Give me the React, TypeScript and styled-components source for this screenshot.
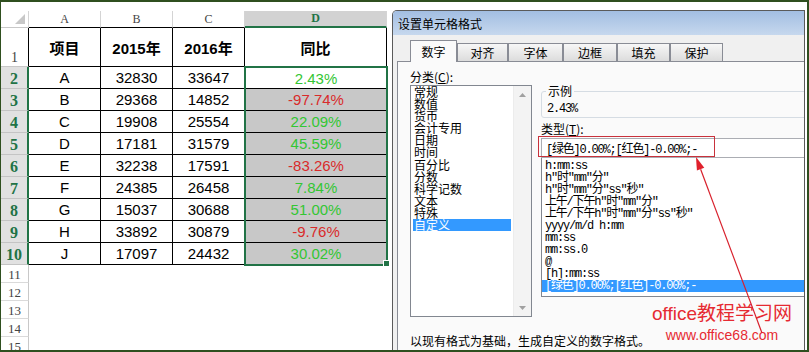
import styled, { createGlobalStyle, css } from "styled-components";

const GlobalStyle = createGlobalStyle`
  html, body {
    margin: 0;
    padding: 0;
    background: #fff;
  }
  body {
    font-family: "Liberation Sans", "Noto Sans CJK SC", sans-serif;
  }
`;

const XL_GREEN = "#217346";
const UP = "#33c633";
const DOWN = "#d92b2b";

type Row = { name: string; y2015: number; y2016: number; pct: string };

const rows: Row[] = [
  { name: "A", y2015: 32830, y2016: 33647, pct: "2.43%" },
  { name: "B", y2015: 29368, y2016: 14852, pct: "-97.74%" },
  { name: "C", y2015: 19908, y2016: 25554, pct: "22.09%" },
  { name: "D", y2015: 17181, y2016: 31579, pct: "45.59%" },
  { name: "E", y2015: 32238, y2016: 17591, pct: "-83.26%" },
  { name: "F", y2015: 24385, y2016: 26458, pct: "7.84%" },
  { name: "G", y2015: 15037, y2016: 30688, pct: "51.00%" },
  { name: "H", y2015: 33892, y2016: 30879, pct: "-9.76%" },
  { name: "J", y2015: 17097, y2016: 24432, pct: "30.02%" },
];

const categories = [
  "常规", "数值", "货币", "会计专用", "日期", "时间",
  "百分比", "分数", "科学记数", "文本", "特殊", "自定义",
];

const formats = [
  'h:mm:ss',
  'h"时"mm"分"',
  'h"时"mm"分"ss"秒"',
  '上午/下午h"时"mm"分"',
  '上午/下午h"时"mm"分"ss"秒"',
  'yyyy/m/d h:mm',
  'mm:ss',
  'mm:ss.0',
  '@',
  '[h]:mm:ss',
  '[绿色]0.00%;[红色]-0.00%;-',
];

const tabs = [
  { label: "数字", w: 47 },
  { label: "对齐", w: 51 },
  { label: "字体", w: 55 },
  { label: "边框", w: 54 },
  { label: "填充", w: 53 },
  { label: "保护", w: 53 },
];

/* ---------- frame ---------- */

const Frame = styled.div`
  width: 809px;
  height: 352px;
  box-sizing: border-box;
  border-style: solid;
  border-color: #2f4f1f;
  border-width: 2px 2px 2px 1px;
  display: flex;
  align-items: flex-start;
  overflow: hidden;
  background: #fff;
`;

/* ---------- spreadsheet ---------- */

const Sheet = styled.div`
  display: flex;
  width: 390px;
  flex-shrink: 0;
  padding-top: 9px;
`;

const Col = styled.div<{ $w: number }>`
  display: flex;
  flex-direction: column;
  width: ${(p) => p.$w}px;
  flex-shrink: 0;
`;

const Corner = styled.div`
  position: relative;
  height: 17px;
  box-sizing: border-box;
  border-right: 1px solid #d4d4d4;
  border-bottom: 1px solid #c8c8c8;

  &::after {
    content: "";
    position: absolute;
    right: 3px;
    bottom: 3px;
    border-left: 10px solid transparent;
    border-bottom: 10px solid #c8c8c8;
  }
`;

const ColHead = styled.div<{ $sel?: boolean }>`
  height: 17px;
  box-sizing: border-box;
  display: flex;
  align-items: center;
  justify-content: center;
  font-family: "Liberation Serif", serif;
  font-size: 12px;
  color: ${(p) => (p.$sel ? XL_GREEN : "#444")};
  font-weight: ${(p) => (p.$sel ? 700 : 400)};
  background: ${(p) => (p.$sel ? "#d2d2d2" : "#fff")};
  border-right: 1px solid #d4d4d4;
  border-bottom: ${(p) => (p.$sel ? `2px solid ${XL_GREEN}` : "1px solid #000")};
`;

type HeadKind = "title" | "sel" | "empty";

const headKinds = {
  title: css`
    font-size: 14px;
    color: #444;
    background: #fff;
    border-right: 1px solid #000;
    border-bottom: 1px solid #c8c8c8;
  `,
  sel: css`
    font-size: 16px;
    font-weight: 700;
    color: ${XL_GREEN};
    background: #e1e1e1;
    border-right: 2px solid ${XL_GREEN};
    border-bottom: 1px solid #c4c4c4;
  `,
  empty: css`
    font-size: 13px;
    color: #444;
    background: #fff;
    border-right: 1px solid #c8c8c8;
    border-bottom: 1px solid #dadada;
  `,
};

const RowHead = styled.div<{ $h: number; $kind: HeadKind }>`
  height: ${(p) => p.$h}px;
  box-sizing: border-box;
  display: flex;
  align-items: flex-end;
  justify-content: center;
  padding-bottom: 1px;
  font-family: "Liberation Serif", serif;
  line-height: 1;
  ${(p) => headKinds[p.$kind]}
`;

const Cell = styled.div<{
  $h: number;
  $bg?: string;
  $color?: string;
  $bold?: boolean;
  $noRight?: boolean;
  $noBottom?: boolean;
}>`
  height: ${(p) => p.$h}px;
  box-sizing: border-box;
  display: flex;
  align-items: center;
  justify-content: center;
  font-family: "Liberation Sans", "Noto Sans CJK SC", sans-serif;
  font-size: 15px;
  font-weight: ${(p) => (p.$bold ? 700 : 400)};
  color: ${(p) => p.$color ?? "#000"};
  background: ${(p) => p.$bg ?? "transparent"};
  border-right: ${(p) => (p.$noRight ? "none" : "1px solid #000")};
  border-bottom: ${(p) => (p.$noBottom ? "none" : "1px solid #000")};
`;

const Selection = styled.div`
  position: relative;
  margin: -1px -1px 0 -1px;
  border: 2px solid ${XL_GREEN};
  display: flex;
  flex-direction: column;
`;

const FillHandle = styled.div`
  position: absolute;
  right: -4px;
  bottom: -3px;
  width: 5px;
  height: 5px;
  background: ${XL_GREEN};
  border: 1px solid #fff;
`;

/* ---------- dialog ---------- */

const Dialog = styled.div`
  position: relative;
  flex: 1;
  align-self: stretch;
  margin: 8px 2px 0 1px;
  display: flex;
  flex-direction: column;
  border: 1px solid #5a5a5a;
  border-bottom: none;
  border-top-left-radius: 5px;
  overflow: hidden;
  font-family: "Noto Sans CJK SC", sans-serif;
  font-size: 12px;
  color: #000;
`;

const TitleBar = styled.div`
  height: 24px;
  flex-shrink: 0;
  display: flex;
  align-items: center;
  padding-left: 5px;
  background: linear-gradient(to bottom, #a2bee2, #c6d8ee);
  font-size: 12px;
`;

const Body = styled.div`
  flex: 1;
  display: flex;
  flex-direction: column;
  padding-left: 4px;
  background: #f0f0f0;
`;

const TabStrip = styled.div`
  height: 26px;
  flex-shrink: 0;
  display: flex;
  align-items: flex-end;
  padding-left: 13px;
`;

const Tab = styled.div<{ $w: number; $active?: boolean }>`
  position: relative;
  z-index: ${(p) => (p.$active ? 2 : 1)};
  width: ${(p) => p.$w}px;
  height: ${(p) => (p.$active ? 22 : 18)}px;
  margin-bottom: ${(p) => (p.$active ? -1 : 0)}px;
  box-sizing: border-box;
  display: flex;
  align-items: center;
  justify-content: center;
  border: 1px solid #898c95;
  border-bottom: none;
  background: ${(p) => (p.$active ? "#fafafa" : "linear-gradient(to bottom, #f7f7f7, #dcdcdc)")};
  font-size: 12px;
`;

const Panel = styled.div`
  flex: 1;
  display: flex;
  flex-direction: column;
  padding: 8px 0 0 12px;
  background: #fafafa;
  border-top: 1px solid #898c95;
  border-left: 1px solid #898c95;
  overflow: hidden;
`;

const Columns = styled.div`
  display: flex;
  gap: 9px;
`;

const LeftCol = styled.div`
  width: 122px;
  flex-shrink: 0;
  display: flex;
  flex-direction: column;
`;

const RightCol = styled.div`
  flex: 1;
  display: flex;
  flex-direction: column;
  margin-right: -6px;
`;

const Label = styled.div<{ $top?: number }>`
  line-height: 14px;
  margin-top: ${(p) => p.$top ?? 0}px;
  font-size: 12px;
`;

const Key = styled.span`
  text-decoration: underline;
`;

const ListBox = styled.div`
  margin-top: 1px;
  height: 232px;
  box-sizing: border-box;
  display: flex;
  border: 1px solid #828790;
  background: #fff;
  overflow: hidden;
`;

const CategoryList = styled.div`
  flex: 1;
  padding: 0 2px;
`;

const Category = styled.div<{ $sel?: boolean }>`
  height: 12.1px;
  line-height: 12.1px;
  padding-left: 1px;
  font-size: 12px;
  white-space: nowrap;
  color: ${(p) => (p.$sel ? "#fff" : "#000")};
  background: ${(p) => (p.$sel ? "#3399ff" : "transparent")};
`;

const ScrollBar = styled.div`
  width: 17px;
  flex-shrink: 0;
  display: flex;
  flex-direction: column;
  justify-content: space-between;
  background: #f3f3f3;
  border-left: 1px solid #ececec;
`;

const ScrollBtn = styled.div`
  height: 17px;
  display: flex;
  align-items: center;
  justify-content: center;
`;

const mono = css`
  font-family: "Liberation Mono", "Noto Sans CJK SC", monospace;
  font-size: 12px;
  letter-spacing: -1.2px;
`;

const Group = styled.fieldset`
  margin: 14px 0 0 0;
  padding: 4px 5px 1px 5px;
  min-inline-size: 0;
  border: 1px solid #d5dce3;
  border-radius: 3px;
`;

const Legend = styled.legend`
  padding: 0 2px;
  margin-left: -1px;
  line-height: 14px;
  font-size: 12px;
`;

const Sample = styled.div`
  ${mono}
  line-height: 14px;
`;

const InputWrap = styled.div`
  position: relative;
  margin-top: 2px;
`;

const TypeInput = styled.div`
  height: 20px;
  box-sizing: border-box;
  display: flex;
  align-items: center;
  padding-left: 4px;
  border: 1px solid #abadb3;
  background: #fff;
  white-space: nowrap;
  ${mono}
`;

const RedMark = styled.div`
  position: absolute;
  left: -3px;
  top: -2px;
  width: 177px;
  height: 21px;
  box-sizing: border-box;
  border: 1.5px solid #c8323c;
  pointer-events: none;
`;

const FormatList = styled.div`
  margin-top: -1px;
  padding: 2px 0 4px;
  border: 1px solid #828790;
  background: #fff;
`;

const FormatItem = styled.div<{ $sel?: boolean }>`
  height: 12px;
  line-height: 12px;
  padding-left: 3px;
  white-space: nowrap;
  ${mono}
  color: ${(p) => (p.$sel ? "#fff" : "#000")};
  background: ${(p) => (p.$sel ? "#3399ff" : "transparent")};
`;

const Hint = styled.div`
  margin-top: 16px;
  line-height: 16px;
  font-size: 12px;
  white-space: nowrap;
`;

const Annotation = styled.svg`
  position: absolute;
  left: 0;
  top: 0;
  width: 100%;
  height: 100%;
  overflow: visible;
  pointer-events: none;
`;

const Watermark = styled.div`
  position: absolute;
  left: 249px;
  top: 292px;
  width: 160px;
  text-align: center;
  color: #e62a32;
  pointer-events: none;
  font-family: "Liberation Sans", "Noto Sans CJK SC", sans-serif;
`;

const WmTitle = styled.div`
  font-size: 19px;
  line-height: 22px;
`;

const WmUrl = styled.div`
  margin-top: 2px;
  font-size: 14px;
  line-height: 16px;
`;

const Arrow = ({ up }: { up?: boolean }) => (
  <svg width="7" height="4" viewBox="0 0 7 4">
    <polygon points={up ? "0,4 7,4 3.5,0" : "0,0 7,0 3.5,4"} fill="#a0a0a0" />
  </svg>
);

const Spreadsheet = () => {
  const last = rows.length - 1;
  return (
    <Sheet>
      <Col $w={28}>
        <Corner />
        <RowHead $h={39} $kind="title">1</RowHead>
        {rows.map((_, i) => (
          <RowHead key={i} $h={22} $kind="sel">{i + 2}</RowHead>
        ))}
        {[11, 12, 13, 14, 15].map((n) => (
          <RowHead key={n} $h={18} $kind="empty">{n}</RowHead>
        ))}
      </Col>
      <Col $w={72}>
        <ColHead>A</ColHead>
        <Cell $h={39} $bold>项目</Cell>
        {rows.map((r) => (
          <Cell key={r.name} $h={22}>{r.name}</Cell>
        ))}
      </Col>
      <Col $w={72}>
        <ColHead>B</ColHead>
        <Cell $h={39} $bold>2015年</Cell>
        {rows.map((r) => (
          <Cell key={r.name} $h={22}>{r.y2015}</Cell>
        ))}
      </Col>
      <Col $w={72}>
        <ColHead>C</ColHead>
        <Cell $h={39} $bold>2016年</Cell>
        {rows.map((r) => (
          <Cell key={r.name} $h={22}>{r.y2016}</Cell>
        ))}
      </Col>
      <Col $w={142}>
        <ColHead $sel>D</ColHead>
        <Cell $h={39} $bold>同比</Cell>
        <Selection>
          {rows.map((r, i) => (
            <Cell
              key={r.name}
              $h={i === 0 || i === last ? 21 : 22}
              $noRight
              $noBottom={i === last}
              $bg={i === 0 ? "#fff" : "#c8c8c8"}
              $color={r.pct.startsWith("-") ? DOWN : UP}
            >
              {r.pct}
            </Cell>
          ))}
          <FillHandle />
        </Selection>
      </Col>
    </Sheet>
  );
};

const FormatDialog = () => (
  <Dialog>
    <TitleBar>设置单元格格式</TitleBar>
    <Body>
      <TabStrip>
        {tabs.map((t, i) => (
          <Tab key={t.label} $w={t.w} $active={i === 0}>
            {t.label}
          </Tab>
        ))}
      </TabStrip>
      <Panel>
        <Columns>
          <LeftCol>
            <Label>
              分类(<Key>C</Key>):
            </Label>
            <ListBox>
              <CategoryList>
                {categories.map((c) => (
                  <Category key={c} $sel={c === "自定义"}>{c}</Category>
                ))}
              </CategoryList>
              <ScrollBar>
                <ScrollBtn><Arrow up /></ScrollBtn>
                <ScrollBtn><Arrow /></ScrollBtn>
              </ScrollBar>
            </ListBox>
          </LeftCol>
          <RightCol>
            <Group>
              <Legend>示例</Legend>
              <Sample>2.43%</Sample>
            </Group>
            <Label $top={4}>
              类型(<Key>T</Key>):
            </Label>
            <InputWrap>
              <TypeInput>[绿色]0.00%;[红色]-0.00%;-</TypeInput>
              <RedMark />
            </InputWrap>
            <FormatList>
              {formats.map((f, i) => (
                <FormatItem key={f} $sel={i === formats.length - 1}>{f}</FormatItem>
              ))}
            </FormatList>
          </RightCol>
        </Columns>
        <Hint>以现有格式为基础，生成自定义的数字格式。</Hint>
      </Panel>
    </Body>
    <Watermark>
      <WmTitle>office教程学习网</WmTitle>
      <WmUrl>www.office68.com</WmUrl>
    </Watermark>
    <Annotation>
      <line x1="307.6" y1="158.2" x2="369" y2="322" stroke="#d8202c" strokeWidth="1.2" />
      <polygon points="303,146 311.3,156.8 303.9,159.6" fill="#e0202c" />
    </Annotation>
  </Dialog>
);

export default function App() {
  return (
    <>
      <GlobalStyle />
      <Frame>
        <Spreadsheet />
        <FormatDialog />
      </Frame>
    </>
  );
}
